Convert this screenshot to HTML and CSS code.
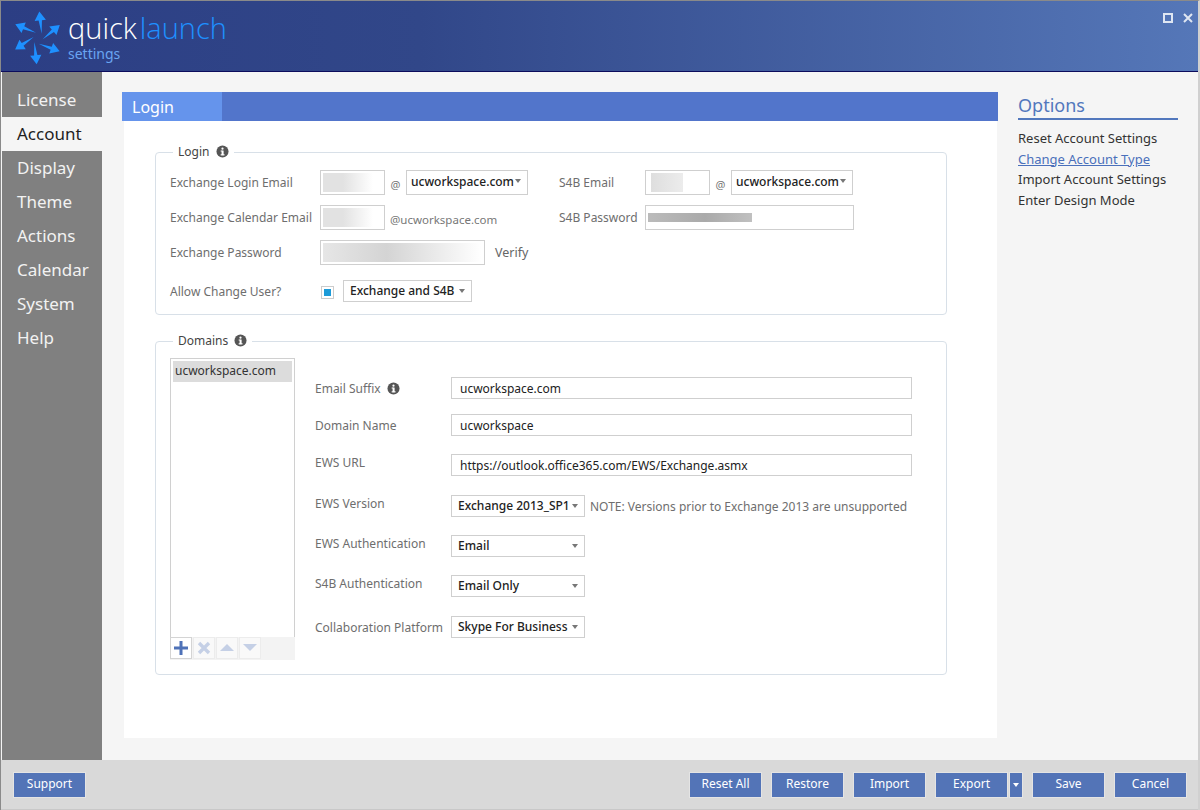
FILE: index.html
```html
<!DOCTYPE html>
<html lang="en">
<head>
    <meta charset="UTF-8">
    <title>QuickLaunch Settings</title>
    <link rel="stylesheet" href="styles.css">
</head>
<body>
    <div class="window">
        <header class="header">
            <svg class="logo" viewBox="36 24 150 168" width="50" height="56">
                <defs>
                    <polygon id="arrow" points="0,0 -5,-40 -17,-40 0,-67 17,-40 5,-40"/>
                </defs>
                <use href="#arrow" transform="translate(122 95) rotate(-6)"/>
                <use href="#arrow" transform="translate(125 112) rotate(50)"/>
                <use href="#arrow" transform="translate(113 125) rotate(110)"/>
                <use href="#arrow" transform="translate(100 120) rotate(174)"/>
                <use href="#arrow" transform="translate(98 105) rotate(-124)"/>
                <use href="#arrow" transform="translate(105 92) rotate(-68)"/>
            </svg>
            <div class="brand">
                <div class="brand-name">quick<span class="brand-accent">launch</span></div>
                <div class="brand-sub">settings</div>
            </div>
            <div class="window-controls">
                <svg width="10" height="10" viewBox="0 0 10 10"><rect x="1" y="1" width="8" height="8" fill="none" stroke="#dfe6f2" stroke-width="2"/></svg>
                <svg width="10" height="10" viewBox="0 0 10 10"><path d="M1 1 L9 9 M9 1 L1 9" stroke="#dfe6f2" stroke-width="2"/></svg>
            </div>
        </header>

        <div class="middle">
            <nav class="sidebar">
                <div class="nav-item">License</div>
                <div class="nav-item active">Account</div>
                <div class="nav-item">Display</div>
                <div class="nav-item">Theme</div>
                <div class="nav-item">Actions</div>
                <div class="nav-item">Calendar</div>
                <div class="nav-item">System</div>
                <div class="nav-item">Help</div>
            </nav>

            <main class="main">
                <div class="title-bar"><div class="title-tab">Login</div></div>
                <div class="panel">
                    <fieldset class="group login-group">
                        <legend>Login <svg class="info" viewBox="0 0 14 14"><use href="#info-icon"/></svg></legend>
                        <div class="login-grid">
                            <div class="login-col">
                                <div class="row">
                                    <label class="lbl lbl-login">Exchange Login Email</label>
                                    <div class="field small"><div class="blur blur-a"></div></div>
                                    <span class="at">@</span>
                                    <div class="select domain-select">ucworkspace.com</div>
                                </div>
                                <div class="row">
                                    <label class="lbl lbl-login">Exchange Calendar Email</label>
                                    <div class="field small"><div class="blur blur-a"></div></div>
                                    <span class="suffix">@ucworkspace.com</span>
                                </div>
                                <div class="row">
                                    <label class="lbl lbl-login">Exchange Password</label>
                                    <div class="field pass"><div class="blur blur-b"></div></div>
                                    <span class="verify">Verify</span>
                                </div>
                                <div class="row row-last">
                                    <label class="lbl lbl-login">Allow Change User?</label>
                                    <span class="check"><span class="check-mark"></span></span>
                                    <div class="select change-select">Exchange and S4B</div>
                                </div>
                            </div>
                            <div class="login-col s4b-col">
                                <div class="row">
                                    <label class="lbl lbl-s4b">S4B Email</label>
                                    <div class="field small"><div class="blur blur-c"></div></div>
                                    <span class="at">@</span>
                                    <div class="select domain-select">ucworkspace.com</div>
                                </div>
                                <div class="row">
                                    <label class="lbl lbl-s4b">S4B Password</label>
                                    <div class="field s4b-pass"><div class="blur blur-d"></div></div>
                                </div>
                            </div>
                        </div>
                    </fieldset>

                    <fieldset class="group domains-group">
                        <legend>Domains <svg class="info" viewBox="0 0 14 14"><use href="#info-icon"/></svg></legend>
                        <div class="domains">
                            <div class="list-wrap">
                                <div class="list"><div class="list-item">ucworkspace.com</div></div>
                                <div class="list-tools">
                                    <div class="tool on"><svg width="14" height="14" viewBox="0 0 14 14"><path d="M7 0 V14 M0 7 H14" stroke="#4f72b8" stroke-width="3"/></svg></div>
                                    <div class="tool"><svg width="14" height="14" viewBox="0 0 14 14"><path d="M2 2 L12 12 M12 2 L2 12" stroke="#c5d0e6" stroke-width="3.4"/></svg></div>
                                    <div class="tool"><svg width="14" height="10" viewBox="0 0 14 10"><path d="M7 1 L14 8 H0 Z" fill="#c5d0e6"/></svg></div>
                                    <div class="tool"><svg width="14" height="10" viewBox="0 0 14 10"><path d="M0 1 H14 L7 8 Z" fill="#c5d0e6"/></svg></div>
                                </div>
                            </div>
                            <div class="domain-form">
                                <div class="form-row r1">
                                    <label class="lbl lbl-domain">Email Suffix <svg class="info" viewBox="0 0 14 14"><use href="#info-icon"/></svg></label>
                                    <div class="text-input">ucworkspace.com</div>
                                </div>
                                <div class="form-row r2">
                                    <label class="lbl lbl-domain">Domain Name</label>
                                    <div class="text-input">ucworkspace</div>
                                </div>
                                <div class="form-row r3">
                                    <label class="lbl lbl-domain up">EWS URL</label>
                                    <div class="text-input">https://outlook.office365.com/EWS/Exchange.asmx</div>
                                </div>
                                <div class="form-row r4">
                                    <label class="lbl lbl-domain up">EWS Version</label>
                                    <div class="select wide-select">Exchange 2013_SP1</div>
                                    <span class="note">NOTE: Versions prior to Exchange 2013 are unsupported</span>
                                </div>
                                <div class="form-row r5">
                                    <label class="lbl lbl-domain up">EWS Authentication</label>
                                    <div class="select wide-select">Email</div>
                                </div>
                                <div class="form-row r6">
                                    <label class="lbl lbl-domain up">S4B Authentication</label>
                                    <div class="select wide-select">Email Only</div>
                                </div>
                                <div class="form-row r7">
                                    <label class="lbl lbl-domain">Collaboration Platform</label>
                                    <div class="select wide-select">Skype For Business</div>
                                </div>
                            </div>
                        </div>
                    </fieldset>
                </div>
            </main>

            <aside class="options">
                <h2 class="options-title">Options</h2>
                <div class="option">Reset Account Settings</div>
                <div class="option link">Change Account Type</div>
                <div class="option">Import Account Settings</div>
                <div class="option">Enter Design Mode</div>
            </aside>
        </div>

        <footer class="footer">
            <div class="btn">Support</div>
            <div class="footer-right">
                <div class="btn">Reset All</div>
                <div class="btn">Restore</div>
                <div class="btn">Import</div>
                <div class="split">
                    <div class="btn">Export</div>
                    <div class="btn btn-arrow"></div>
                </div>
                <div class="btn">Save</div>
                <div class="btn">Cancel</div>
            </div>
        </footer>
    </div>

    <svg width="0" height="0" class="defs">
        <symbol id="info-icon" viewBox="0 0 14 14">
            <circle cx="7" cy="7" r="6.5" fill="#555"/>
            <rect x="6" y="6" width="2.2" height="5" fill="#fff"/>
            <rect x="5" y="10" width="4.2" height="1.2" fill="#fff"/>
            <rect x="5" y="6" width="2" height="1" fill="#fff"/>
            <circle cx="7" cy="4" r="1.2" fill="#fff"/>
        </symbol>
    </svg>
</body>
</html>
```

FILE: styles.css
```css
* {
    box-sizing: border-box;
}
body {
    margin: 0;
    font-family: "Noto Sans", "Open Sans", sans-serif;
    font-size: 12px;
    color: #333;
    background-color: #f5f5f5;
}
.defs {
    display: block;
    height: 0;
}
.window {
    display: flex;
    flex-direction: column;
    width: 1200px;
    height: 810px;
    overflow: hidden;
    border-top: 1px solid #8a8a8a;
    border-left: 1px solid #8a8a8a;
    border-right: 2px solid #d0d0d0;
}

/* header */
.header {
    display: flex;
    height: 71px;
    flex-shrink: 0;
    padding-left: 12px;
    background: linear-gradient(90deg, #2c3e84 0%, #314789 35%, #5577b8 100%);
    border-bottom: 1px solid #0c0c5c;
    position: relative;
}
.logo {
    margin-top: 9px;
    fill: #1e90ff;
}
.brand {
    margin-left: 5px;
    padding-top: 8px;
}
.brand-name {
    font-family: "Open Sans", sans-serif;
    font-weight: 300;
    font-size: 29px;
    line-height: 38px;
    color: #fff;
}
.brand-accent {
    color: #1e90ff;
    margin-left: 3px;
}
.brand-sub {
    font-size: 14px;
    line-height: 14px;
    color: #6aa5f2;
}
.window-controls {
    position: absolute;
    top: 12px;
    right: 5px;
    display: flex;
    gap: 10px;
}

/* layout */
.middle {
    display: flex;
    flex: 1;
    min-height: 0;
}
.sidebar {
    width: 101px;
    flex-shrink: 0;
    padding-top: 11px;
    background-color: #808080;
    border-left: 1px solid #f5f5f5;
}
.nav-item {
    height: 34px;
    padding-left: 15px;
    font-size: 17px;
    line-height: 33px;
    color: #f2f2f2;
}
.nav-item.active {
    background-color: #f5f5f5;
    color: #1f1f1f;
}
.main {
    width: 896px;
    flex-shrink: 0;
    padding: 20px 0 22px 20px;
    display: flex;
    flex-direction: column;
}
.title-bar {
    height: 29px;
    flex-shrink: 0;
    background-color: #5275cb;
}
.title-tab {
    width: 100px;
    height: 29px;
    padding-left: 10px;
    font-size: 16px;
    line-height: 30px;
    color: #fff;
    background-color: #6594ec;
}
.panel {
    flex: 1;
    margin: 0 1px 0 2px;
    padding: 23px 50px 0 31px;
    background-color: #fff;
}

/* groups */
.group {
    margin: 0;
    padding: 0;
    border: 1px solid #d8e0e8;
    border-radius: 4px;
}
.group legend {
    margin-left: 3px;
    padding: 0 5px;
    font-size: 12px;
    line-height: 16px;
    color: #444;
}
.info {
    width: 13px;
    height: 13px;
    margin-left: 3px;
    vertical-align: -2px;
}
.login-group {
    height: 171px;
    padding: 10px 0 0 14px;
}
.domains-group {
    height: 342px;
    margin-top: 18px;
    padding: 9px 0 0 14px;
}
.login-grid {
    display: flex;
}
.login-col {
    width: 389px;
}
.s4b-col {
    width: 300px;
}
.row {
    display: flex;
    align-items: center;
    height: 25px;
    margin-bottom: 10px;
}
.row-last {
    height: 22px;
    margin-top: 15px;
    margin-bottom: 0;
}
.lbl {
    color: #6e6e6e;
    flex-shrink: 0;
}
.lbl-login {
    width: 150px;
}
.lbl-s4b {
    width: 86px;
}
.lbl-domain {
    width: 136px;
}
.field {
    height: 25px;
    padding: 2px;
    border: 1px solid #cfcfcf;
    background-color: #fff;
}
.field.small {
    width: 65px;
}
.field.pass {
    width: 165px;
}
.s4b-pass {
    width: 209px;
    padding: 7px 2px;
}
.blur {
    height: 100%;
}
.blur-a {
    width: 50px;
    background: linear-gradient(90deg, #e2e2e2 40%, #fff 100%);
}
.blur-b {
    background: linear-gradient(90deg, #e6e6e6 0%, #d4d4d4 40%, #fff 100%);
}
.blur-c {
    width: 32px;
    margin-left: 3px;
    background: linear-gradient(90deg, #dedede, #ececec);
}
.blur-d {
    width: 104px;
    background: linear-gradient(90deg, #bbb, #aaa 55%, #c0c0c0);
}
.at {
    width: 21px;
    text-align: center;
    padding-top: 3px;
    font-size: 11px;
    color: #777;
}
.suffix {
    margin-left: 5px;
    padding-top: 3px;
    font-size: 11.5px;
    color: #777;
}
.verify {
    margin-left: 10px;
    font-size: 12.5px;
    color: #666;
}
.check {
    display: flex;
    align-items: center;
    justify-content: center;
    width: 13px;
    height: 13px;
    margin: 2px 9px 0 1px;
    border: 1px solid #ccc;
}
.check-mark {
    width: 7px;
    height: 7px;
    background-color: #1d9bd8;
}
.select {
    position: relative;
    flex-shrink: 0;
    height: 22px;
    padding-left: 6px;
    border: 1px solid #cfcfcf;
    background-color: #fff;
    line-height: 20px;
    font-weight: 500;
    color: #222;
}
.select::after {
    content: "";
    position: absolute;
    right: 6px;
    top: 8px;
    border-left: 3px solid transparent;
    border-right: 3px solid transparent;
    border-top: 4px solid #777;
}
.domain-select {
    width: 122px;
    height: 25px;
    padding-left: 4px;
    line-height: 21px;
}
.change-select {
    width: 129px;
}
.wide-select {
    width: 134px;
}

/* domains */
.domains {
    display: flex;
}
.list-wrap {
    width: 125px;
    flex-shrink: 0;
}
.list {
    height: 279px;
    padding: 2px;
    border: 1px solid #d0d0d0;
    border-bottom: none;
}
.list-item {
    height: 21px;
    padding-left: 2px;
    line-height: 20px;
    color: #333;
    background-color: #dcdcdc;
}
.list-tools {
    display: flex;
    gap: 1px;
    height: 23px;
    background-color: #f3f3f3;
}
.tool {
    display: flex;
    align-items: center;
    justify-content: center;
    width: 22px;
    height: 22px;
    border: 1px solid #ececec;
    background-color: #f9f9f9;
}
.tool.on {
    border-color: #d4d4d4;
    background-color: #fff;
}
.domain-form {
    width: 597px;
    margin-left: 20px;
    padding-top: 19px;
}
.form-row {
    display: flex;
    align-items: center;
    height: 22px;
}
.r2 { margin-top: 15px; }
.r3 { margin-top: 18px; }
.r4 { margin-top: 19px; }
.r5, .r6 { margin-top: 18px; }
.r7 { margin-top: 19px; }
.lbl-domain.up {
    margin-top: -5px;
}
.text-input {
    width: 461px;
    height: 22px;
    padding-left: 8px;
    border: 1px solid #cfcfcf;
    line-height: 21px;
    color: #222;
}
.note {
    margin-left: 5px;
    color: #6e6e6e;
}

/* options */
.options {
    width: 160px;
    margin-left: 20px;
    padding-top: 20px;
}
.options-title {
    margin: 0 0 8px;
    height: 28px;
    font-size: 18px;
    font-weight: 400;
    line-height: 26px;
    color: #5278bd;
    border-bottom: 2px solid #5278bd;
}
.option {
    height: 20.5px;
    font-size: 13px;
    line-height: 20px;
    color: #333;
}
.option.link {
    color: #4a70bb;
    text-decoration: underline;
}

/* footer */
.footer {
    display: flex;
    justify-content: space-between;
    align-items: center;
    height: 50px;
    flex-shrink: 0;
    padding: 0 11px 0 12px;
    background-color: #d9d9d9;
    border-bottom: 1px solid #c8c8c8;
}
.footer-right {
    display: flex;
    gap: 9px;
}
.btn {
    width: 73px;
    height: 26px;
    text-align: center;
    font-size: 12px;
    line-height: 24px;
    color: #fff;
    background-color: #5374b7;
    outline: 1px solid #e4e4e4;
    outline-offset: -1px;
}
.split {
    display: flex;
    gap: 1px;
}
.btn-arrow {
    position: relative;
    width: 14px;
}
.btn-arrow::after {
    content: "";
    position: absolute;
    left: 4px;
    top: 11px;
    border-left: 3px solid transparent;
    border-right: 3px solid transparent;
    border-top: 4px solid #fff;
}
```
